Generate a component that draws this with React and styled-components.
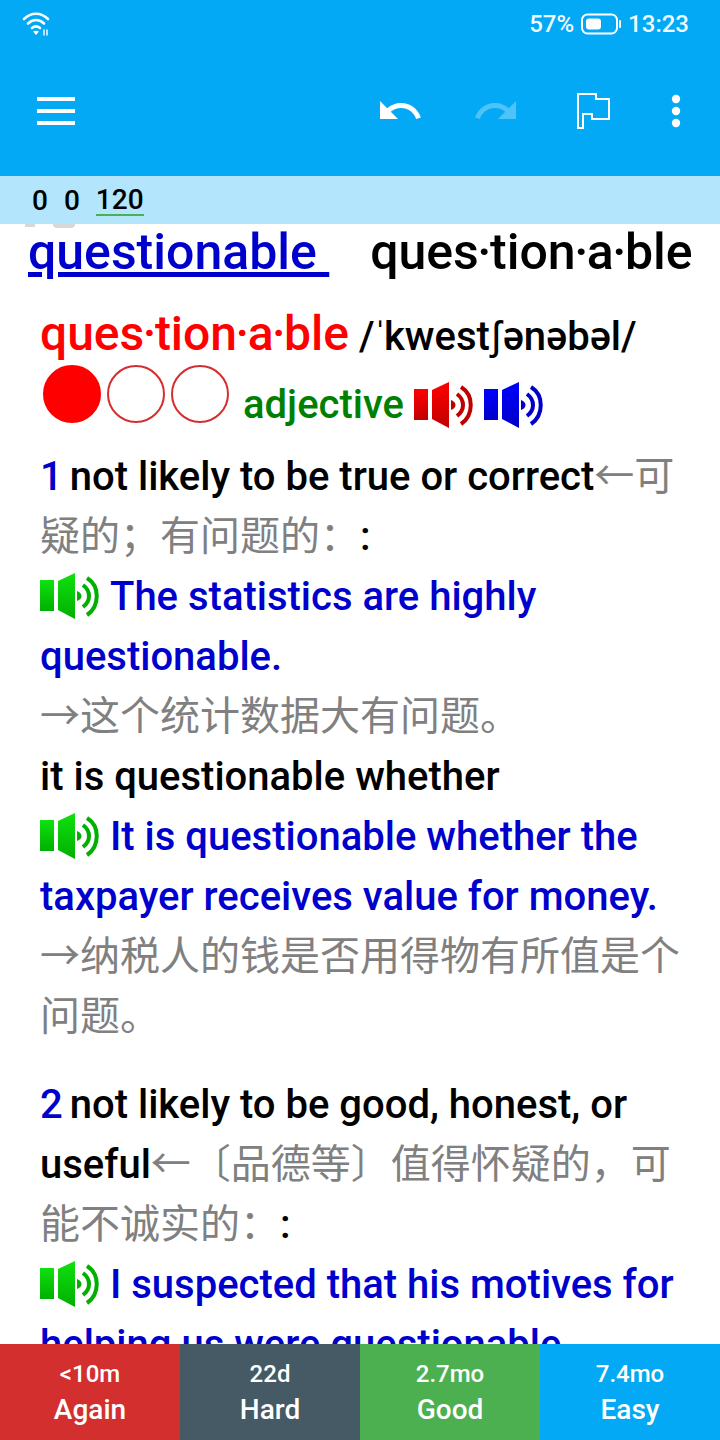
import React from "react";
import styled, { createGlobalStyle } from "styled-components";

const Global = createGlobalStyle`
  html, body { margin: 0; padding: 0; background: #fff; }
  #root { width: 720px; height: 1440px; overflow: hidden; }
  * { box-sizing: border-box; }
`;
const FONT = `Roboto, "Noto Sans CJK SC", sans-serif`;

const Page = styled.div`
  width: 720px; height: 1440px; display: flex; flex-direction: column;
  font-family: ${FONT}; font-weight: 500; overflow: hidden; background: #fff;
`;
const Header = styled.header`
  height: 176px; background: #03a9f4; color: #fff; display: flex; flex-direction: column; flex: none;
`;
const StatusBar = styled.div`
  height: 50px; display: flex; align-items: center; padding: 0 31px 2px 22px;
  font-size: 24px;
`;
const StatusRight = styled.div`
  margin-left: auto; display: flex; align-items: center; gap: 7px; color: rgba(255,255,255,.95);
`;
const Toolbar = styled.div`
  height: 122px; display: flex; align-items: center; padding: 0 39px 0 37px;
`;
const Spacer = styled.div` flex: 1; `;
const ToolIcon = styled.svg`
  display: block; flex: none; fill: #fff; margin-left: ${p => p.$ml || 0}px; opacity: ${p => p.$dim ? .3 : 1};
`;
const FlagIcon = styled.svg`
  display: block; flex: none; fill: none; stroke: #fff; stroke-width: 2; margin-left: 56px;
`;
const SubBar = styled.div`
  height: 48px; flex: none; background: #b3e5fc; display: flex; align-items: center; padding: 1px 0 0 32px; gap: 16px;
  font-size: 28px; color: #000; position: relative; z-index: 1;
`;
const Due = styled.span`
  border-bottom: 2px solid #4caf50; line-height: 28px;
`;
const Content = styled.main`
  flex: 1; min-height: 0; overflow: hidden; position: relative;
`;
const RemnantBar = styled.span`
  position: absolute; top: 0; left: 25px; width: 10px; height: 3px; background: #d8d8d8;
`;
const RemnantBowl = styled.span`
  position: absolute; top: 0; left: 53px; width: 22px; height: 4px; background: #d8d8d8; border-radius: 0 0 11px 11px;
`;
const TitleRow = styled.div`
  display: flex; align-items: baseline; padding-left: 28px; font-size: 50px; line-height: 56px; white-space: pre; margin-bottom: 24px;
`;
const TitleLink = styled.a`
  color: #0000cc; text-decoration: underline; margin-right: 41px;
`;
const TitleText = styled.span` color: #000; `;
const Entry = styled.div`
  padding: 0 32px 0 40px; font-size: 40px; line-height: 60px; color: #000;
`;
const HeadLine = styled.div` margin-bottom: -2px; `;
const Head = styled.span` color: #f00; font-size: 48px; `;
const Sep = styled.span` margin: 0 -1.5px; `;
const Pron = styled.span` color: #000; `;
const Stress = styled.span` margin: 0 -3px 0 -1px; `;
const Esh = styled.span` margin: 0 2px; `;
const Dot = styled.span`
  display: inline-block; width: 58px; height: 58px; border-radius: 50%; margin: 0 6px 0 ${p => p.$first ? 3 : 0}px;
  border: 2px solid #d32f2f; background: ${p => p.$on ? "#f00" : "#fff"}; ${p => p.$on && "border-color:#f00;"}
  vertical-align: -5px;
`;
const Pos = styled.span` color: #008000; margin-left: 8px; `;
const Num = styled.span` color: #0000cc; margin-right: 7px; `;
const Cn = styled.span` color: #808080; font-weight: 400; `;
const Ex = styled.span` color: #0000cc; `;
const Sense = styled.div` margin-top: ${p => p.$mt || 0}px; `;
const SpeakerSvg = styled.svg`
  display: inline-block; width: 60px; height: 48px; vertical-align: ${p => p.$va}px; margin-right: ${p => p.$mr}px; filter: blur(.7px);
`;
const Footer = styled.footer`
  height: 96px; flex: none; display: grid; grid-template-columns: repeat(4, 1fr); position: relative; z-index: 1;
`;
const Ease = styled.div`
  background: ${p => p.$bg}; color: #fff; display: flex; flex-direction: column; align-items: center; padding-top: 14px;
`;
const EaseTime = styled.span` font-size: 24px; line-height: 32px; `;
const EaseLabel = styled.span` font-size: 28px; line-height: 40px; `;

const Speaker = ({ c1, c2, id, mr = 10, va = -11 }) => (
  <SpeakerSvg viewBox="0 0 60 48" $mr={mr} $va={va}>
    <defs>
      <linearGradient id={id} x1="0" y1="0" x2="0" y2="1">
        <stop offset="0" stopColor={c1} />
        <stop offset="1" stopColor={c2} />
      </linearGradient>
    </defs>
    <rect x="0" y="8" width="14" height="31" fill={`url(#${id})`} />
    <path d="M18 9 L35 1 L35 47 L18 38Z" fill={`url(#${id})`} />
    <path d="M37 19 C43 21 43 27 37 29Z" fill={c2} />
    <path d="M43 13 C51 19 51 29 43 35" fill="none" stroke={c2} strokeWidth="4" />
    <path d="M47 6 C60 14 60 34 47 43" fill="none" stroke={c2} strokeWidth="4" />
  </SpeakerSvg>
);
const Green = ({ id }) => <Speaker c1="#10e010" c2="#00b000" id={id} va={-10} />;

const Syllables = () => (
  <>ques<Sep>·</Sep>tion<Sep>·</Sep>a<Sep>·</Sep>ble</>
);

export default function App() {
  return (
    <Page>
      <Global />
      <Header>
        <StatusBar>
          <svg width="30" height="26" viewBox="0 0 30 26" fill="none" stroke="#fff" strokeWidth="2.6" strokeLinecap="round">
            <path d="M2 8 C9 1 19 1 26 8" />
            <path d="M6 12.5 C11 8 17 8 22 12.5" />
            <path d="M10 17 C12.5 15 15.5 15 18 17" />
            <path d="M14 24 L11 20.5 C13 19.5 15 19.5 17 20.5Z" fill="#fff" stroke="none" />
            <path d="M22 19v5M25 19v5" strokeWidth="1.4" />
          </svg>
          <StatusRight>
            <span>57%</span>
            <svg width="40" height="22" viewBox="0 0 40 22">
              <rect x="1" y="1.5" width="35" height="19" rx="5.5" fill="none" stroke="#fff" strokeWidth="2" />
              <rect x="5" y="5.5" width="15" height="11" rx="3" fill="#fff" />
              <rect x="38" y="7" width="2" height="8" rx="1" fill="#fff" />
            </svg>
            <span>13:23</span>
          </StatusRight>
        </StatusBar>
        <Toolbar>
          <ToolIcon width="38" height="28" viewBox="0 0 38 28">
            <rect y="0" width="38" height="4" /><rect y="12" width="38" height="4" /><rect y="24" width="38" height="4" />
          </ToolIcon>
          <Spacer />
          <ToolIcon width="48" height="48" viewBox="0 0 24 24">
            <path d="M12.5 8c-2.65 0-5.05.99-6.9 2.6L2 7v9h9l-3.62-3.62c1.39-1.16 3.16-1.88 5.12-1.88 3.54 0 6.55 2.31 7.6 5.5l2.37-.78C21.08 11.03 17.15 8 12.5 8z" />
          </ToolIcon>
          <ToolIcon width="48" height="48" viewBox="0 0 24 24" $ml={48} $dim>
            <path d="M18.4 10.6C16.55 8.99 14.15 8 11.5 8c-4.65 0-8.58 3.03-9.96 7.22L3.9 16c1.05-3.19 4.05-5.5 7.6-5.5 1.95 0 3.73.72 5.12 1.88L13 16h9V7l-3.6 3.6z" />
          </ToolIcon>
          <FlagIcon width="36" height="38" viewBox="0 0 36 38">
            <path d="M2 2 H20 V7 H33 V27 H16 V22 H7 V36 H2Z" />
          </FlagIcon>
          <ToolIcon width="10" height="34" viewBox="0 0 10 34" $ml={59}>
            <circle cx="5" cy="5" r="4.2" /><circle cx="5" cy="17" r="4.2" /><circle cx="5" cy="29" r="4.2" />
          </ToolIcon>
        </Toolbar>
      </Header>
      <SubBar>
        <span>0</span><span>0</span><Due>120</Due>
      </SubBar>
      <Content>
        <RemnantBar /><RemnantBowl />
        <TitleRow>
          <TitleLink>questionable </TitleLink>
          <TitleText><Syllables /></TitleText>
        </TitleRow>
        <Entry>
          <HeadLine><Head><Syllables /></Head> <Pron>/<Stress>ˈ</Stress>kwest<Esh>ʃ</Esh>ənəbəl/</Pron></HeadLine>
          <div>
            <Dot $on $first /><Dot /><Dot />
            <Pos>adjective</Pos>{" "}
            <Speaker c1="#ff0000" c2="#c00000" id="r" />
            <Speaker c1="#0000ff" c2="#0000c8" id="b" mr={0} />
          </div>
          <Sense $mt={12}>
            <div><Num>1</Num>not likely to be true or correct<Cn>←可疑的；有问题的：</Cn>:</div>
            <div><Green id="g1" /><Ex>The statistics are highly questionable.</Ex></div>
            <div><Cn>→这个统计数据大有问题。</Cn></div>
            <div>it is questionable whether</div>
            <div><Green id="g2" /><Ex>It is questionable whether the taxpayer receives value for money.</Ex></div>
            <div><Cn>→纳税人的钱是否用得物有所值是个问题。</Cn></div>
          </Sense>
          <Sense $mt={28}>
            <div><Num>2</Num>not likely to be good, honest, or useful<Cn>←〔品德等〕值得怀疑的，可能不诚实的：</Cn>:</div>
            <div><Green id="g3" /><Ex>I suspected that his motives for helping us were questionable.</Ex></div>
          </Sense>
        </Entry>
      </Content>
      <Footer>
        <Ease $bg="#d32f2f"><EaseTime>&lt;10m</EaseTime><EaseLabel>Again</EaseLabel></Ease>
        <Ease $bg="#455a64"><EaseTime>22d</EaseTime><EaseLabel>Hard</EaseLabel></Ease>
        <Ease $bg="#4caf50"><EaseTime>2.7mo</EaseTime><EaseLabel>Good</EaseLabel></Ease>
        <Ease $bg="#03a9f4"><EaseTime>7.4mo</EaseTime><EaseLabel>Easy</EaseLabel></Ease>
      </Footer>
    </Page>
  );
}
